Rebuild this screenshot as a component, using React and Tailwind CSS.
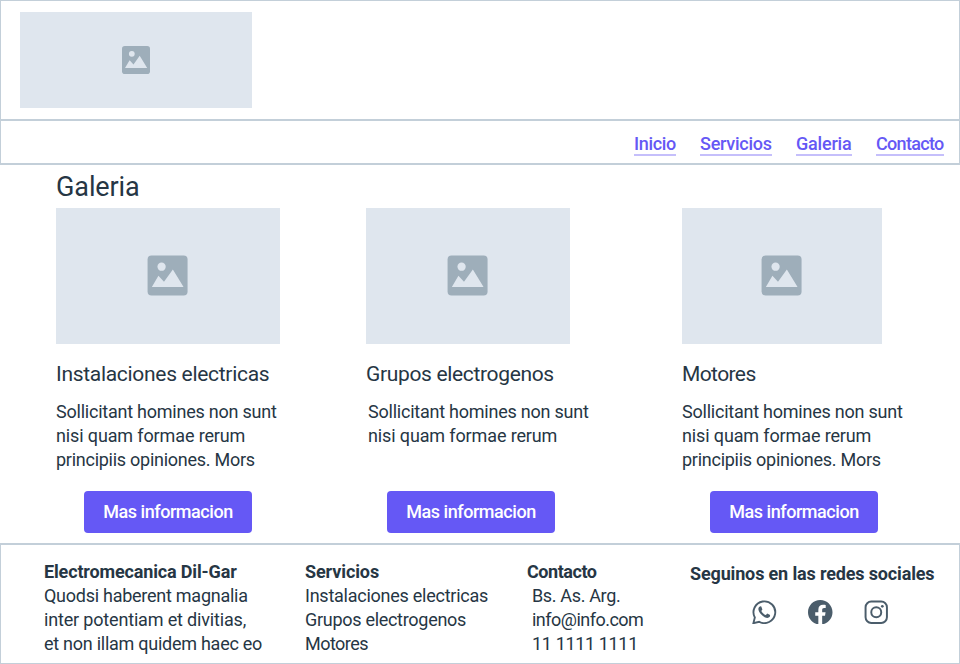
const Picture = ({ className, viewBox = "0 0 28 28" }) => (
  <svg viewBox={viewBox} className={`overflow-visible ${className}`}>
    <rect width="28" height="28" rx="2.8" fill="#9eaeba" />
    <circle cx="9.8" cy="7.8" r="2.9" fill="#dfe6ee" />
    <path d="M3 22 7.6 14.2 11.5 18.4 17.7 9.8 25.2 22Z" fill="#dfe6ee" />
  </svg>
);

const Line = ({ children, className = "" }) => (
  <div className="flex whitespace-pre"><span className={className}>{children}</span></div>
);

const Card = ({ image, title, body, button, short, children }) => (
  <article className="flex flex-col items-start">
    <div className={`flex h-34 items-center justify-center bg-[#dfe6ee] ${image}`}>
      <Picture className="size-10" viewBox="0.3 0.3 28 28" />
    </div>
    <h2 className={`mt-[14px] text-[21px] leading-8 whitespace-nowrap ${title}`}>{children}</h2>
    <div className={`mt-[10px] h-[72px] ${body}`}>
      <Line className="tracking-[-0.23px]">Sollicitant homines non sunt</Line>
      <Line className="tracking-[-0.13px]">nisi quam formae rerum</Line>
      {!short && <Line className="tracking-[-0.26px]">principiis opiniones. Mors</Line>}
    </div>
    <button className={`mt-[19px] h-[42px] w-42 rounded bg-[#6558f5] font-medium tracking-[-0.46px] whitespace-nowrap text-white ${button}`}>
      Mas informacion
    </button>
  </article>
);

const NavLink = ({ children, className }) => (
  <a href="#" className={`h-6 border-b-2 border-[#c5bffb] whitespace-nowrap ${className}`}>{children}</a>
);

export default function App() {
  return (
    <div className="flex h-[664px] w-[960px] flex-col bg-white font-['Roboto',sans-serif] text-[18px] leading-6 text-[#263644]">
      <header className="h-[120px] border border-[#c3cfd9] pt-[11px] pl-[19px]">
        <div className="flex h-24 w-[232px] items-center justify-center bg-[#dfe6ee]">
          <Picture className="size-7" />
        </div>
      </header>
      <nav className="flex h-11 justify-end gap-6 border border-[#c3cfd9] pt-[11px] pr-[15px] font-medium text-[#6558f5]">
        <NavLink className="w-[42px] tracking-[-0.35px]">Inicio</NavLink>
        <NavLink className="w-[72px] tracking-[-0.25px]">Servicios</NavLink>
        <NavLink className="w-14 tracking-[-0.2px]">Galeria</NavLink>
        <NavLink className="w-[68px] tracking-[-0.7px]">Contacto</NavLink>
      </nav>
      <main className="h-[380px] border-y border-[#c3cfd9] pl-14">
        <h1 className="flex h-[43px] text-[27px] leading-[44px] tracking-[-0.1px]">Galeria</h1>
        <div className="grid grid-cols-[310px_316px_1fr]">
          <Card image="w-56" title="tracking-[-0.3px]" body="" button="ml-7">Instalaciones electricas</Card>
          <Card image="w-51" title="tracking-[-0.34px]" body="ml-0.5" button="ml-[21px]" short>Grupos electrogenos</Card>
          <Card image="w-50" title="tracking-[-0.6px]" body="" button="ml-7">Motores</Card>
        </div>
      </main>
      <footer className="grid h-[120px] grid-cols-[261px_222px_163px_1fr] border border-[#c3cfd9] pt-[15px] pl-[43px]">
        <section>
          <Line className="font-bold tracking-[-0.15px]">Electromecanica Dil-Gar</Line>
          <Line className="tracking-[-0.26px]">Quodsi haberent magnalia</Line>
          <Line className="tracking-[-0.17px]">inter potentiam et divitias,</Line>
          <Line className="tracking-[-0.26px]">et non illam quidem haec eo</Line>
        </section>
        <section>
          <Line className="font-bold tracking-[-0.1px]">Servicios</Line>
          <Line className="tracking-[-0.25px]">Instalaciones electricas</Line>
          <Line className="tracking-[-0.29px]">Grupos electrogenos</Line>
          <Line className="tracking-[-0.55px]">Motores</Line>
        </section>
        <section>
          <Line className="font-bold tracking-[-0.45px]">Contacto</Line>
          <div className="pl-[5px]">
            <Line className="tracking-[-0.35px]">Bs. As. Arg.</Line>
            <Line className="tracking-[-0.52px]">info@info.com</Line>
            <Line className="tracking-[-0.35px]">11 1111 1111</Line>
          </div>
        </section>
        <section className="pt-0.5">
          <Line className="font-bold tracking-[-0.15px]">Seguinos en las redes sociales</Line>
          <div className="mt-[13.5px] flex gap-[31.5px] pl-[62px] text-[#4b5d6b]">
            <svg viewBox="0 0 25 25" className="size-[24.5px]" fill="none" stroke="currentColor" strokeWidth="1.9">
              <path d="M1.4 23.7 2.9 17.8A11.1 11.1 0 1 1 7.3 22.2Z" />
              <path d="M8.6 6.4 7.2 7.1C5.5 9.2 7.1 12.2 9.5 14.9 12.2 17.7 16 19.5 18.2 17.2L18.5 15.3 15.5 13.8 14.2 15.4C12.4 14.8 10.5 13 9.5 11.1L10.6 9.8 9.5 6.7Z" fill="currentColor" stroke="none" />
            </svg>
            <svg viewBox="0 0 24 24" className="size-[24.5px]" fill="currentColor">
              <path d="M24 12.07C24 5.44 18.63.07 12 .07S0 5.44 0 12.07c0 5.99 4.39 10.95 10.13 11.86v-8.39H7.08v-3.47h3.05V9.43c0-3.01 1.79-4.67 4.53-4.67 1.31 0 2.69.24 2.69.24v2.95h-1.52c-1.49 0-1.95.93-1.95 1.87v2.25h3.32l-.53 3.47h-2.79v8.39C19.61 23.02 24 18.06 24 12.07" />
            </svg>
            <svg viewBox="0 0 25 25" className="size-[24.5px]" fill="none" stroke="currentColor" strokeWidth="2">
              <rect x="1.6" y="1.6" width="21.8" height="21.8" rx="5.8" />
              <circle cx="12.5" cy="12.5" r="5.1" />
              <circle cx="18.7" cy="6.5" r="1.4" fill="currentColor" stroke="none" />
            </svg>
          </div>
        </section>
      </footer>
    </div>
  );
}
